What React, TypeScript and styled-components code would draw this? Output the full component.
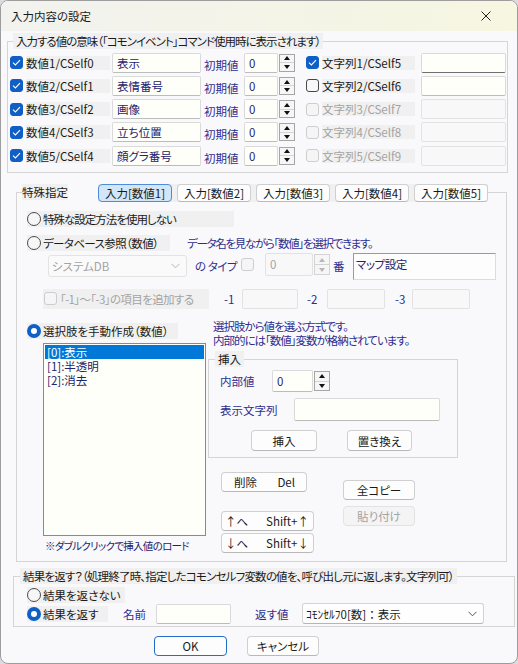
import React from 'react'
import styled, { createGlobalStyle, css } from 'styled-components'

const ink = '#1a1a1a'
const navy = '#2d2d8e'
const fieldInk = '#23236c'
const mute = '#a3a3a3'
const shade = '#f0f0f0'
const accent = '#0f5fc6'

const GlobalStyle = createGlobalStyle`
  * { box-sizing: border-box; }
  html, body { margin: 0; padding: 0; background: #dcdce0; }
  body {
    font-family: "Noto Sans CJK JP", "Noto Sans", sans-serif;
    font-size: 11.5px;
    line-height: 16px;
    font-feature-settings: "palt";
    color: ${ink};
  }
`

const Window = styled.div`
  width: 518px;
  height: 664px;
  display: flex;
  flex-direction: column;
  background: #f9f9fc;
  border: 1px solid #9d9d9d;
  border-radius: 8px;
  overflow: hidden;
`

const TitleBar = styled.div`
  flex: none;
  height: 30px;
  display: flex;
  align-items: center;
  justify-content: space-between;
  padding: 0 26px 0 10px;
  background: linear-gradient(90deg, #f2f2ef 0%, #f6f6e1 100%);
`

const Title = styled.span`
  font-size: 11.5px;
  line-height: 16px;
`

/* ---------- group boxes ---------- */

const Group = styled.fieldset`
  margin: 0;
  padding: 0;
  min-width: 0;
  border: 1px solid #d5d5d5;
`
const TopGroup = styled(Group)`
  margin: 2px 0 0 6px;
  width: 501px;
`
const SpecialGroup = styled(Group)`
  margin: 11px 0 0 15px;
  width: 491px;
`
const ResultGroup = styled(Group)`
  margin: 6px 0 0 12px;
  width: 502px;
`
const InsertGroup = styled(Group)`
  margin-top: 4px;
  width: 250px;
`

const Legend = styled.legend<{ $offset: number; $ls?: number }>`
  margin-left: ${p => p.$offset}px;
  padding: 0 3px;
  height: 16px;
  line-height: 16px;
  letter-spacing: ${p => p.$ls ?? 0}px;
  background: ${shade};
  white-space: nowrap;
`

const SpecialLegend = styled.legend`
  margin-left: 5px;
  padding: 0;
  height: 16px;
  display: flex;
  align-items: flex-start;
`
const SpecialTitle = styled.span`
  height: 16px;
  line-height: 16px;
  padding: 0;
  background: ${shade};
`
const TabStrip = styled.div`
  margin-left: 30px;
  height: 18px;
  display: flex;
  gap: 5px;
  background: ${shade};
`
const Tab = styled.span<{ $active?: boolean }>`
  width: 74px;
  height: 18px;
  display: flex;
  align-items: center;
  justify-content: center;
  border-radius: 4px;
  line-height: 16px;
  border: 1px solid ${p => (p.$active ? '#4d8cd6' : '#cfcfcf')};
  border-bottom-color: ${p => (p.$active ? '#4d8cd6' : '#b9b9b9')};
  background: ${p => (p.$active ? '#d3e5f8' : '#fdfdfd')};
`

/* ---------- controls ---------- */

type CheckState = 'on' | 'off' | 'dis'

const Box = styled.span<{ $state: CheckState }>`
  flex: none;
  width: 13px;
  height: 13px;
  border-radius: 3px;
  display: inline-flex;
  align-items: center;
  justify-content: center;
  ${p => p.$state === 'on' && css`background: ${accent}; border: 1px solid ${accent};`}
  ${p => p.$state === 'off' && css`background: #f7f7f7; border: 1px solid #474747;`}
  ${p => p.$state === 'dis' && css`background: #f5f5f5; border: 1px solid #cdcdcd;`}
`

const Check = ({ state }: { state: CheckState }) => (
  <Box $state={state}>
    {state === 'on' && (
      <svg width="9" height="7" viewBox="0 0 9 7">
        <polyline points="1,3.6 3.4,6 8,1.2" fill="none" stroke="#fff" strokeWidth="1.1" />
      </svg>
    )}
  </Box>
)

const Radio = styled.span<{ $on?: boolean }>`
  flex: none;
  width: 14px;
  height: 14px;
  border-radius: 50%;
  display: inline-flex;
  align-items: center;
  justify-content: center;
  ${p =>
    p.$on
      ? css`
          background: ${accent};
          &::after {
            content: '';
            width: 6px;
            height: 6px;
            border-radius: 50%;
            background: #fff;
          }
        `
      : css`
          background: #f7f7f7;
          border: 1px solid #4b4b4b;
        `}
`

const CheckItem = styled.div<{ $w: number; $dis?: boolean }>`
  display: flex;
  align-items: center;
  width: ${p => p.$w}px;
  color: ${p => (p.$dis ? mute : ink)};
`
const Caption = styled.span`
  flex: 1;
  margin-left: 3px;
  height: 14px;
  line-height: 14px;
  background: ${shade};
  white-space: nowrap;
`

const Shaded = styled.div<{ $w: number; $h?: number; $dis?: boolean; $ls?: number }>`
  flex: none;
  display: flex;
  align-items: center;
  gap: 2px;
  width: ${p => p.$w}px;
  height: ${p => p.$h ?? 16}px;
  line-height: 16px;
  letter-spacing: ${p => p.$ls ?? 0}px;
  background: ${shade};
  color: ${p => (p.$dis ? mute : ink)};
  white-space: nowrap;
`

const Field = styled.div<{ $w: number; $h?: number; $dis?: boolean; $focus?: boolean }>`
  flex: none;
  width: ${p => p.$w}px;
  height: ${p => p.$h ?? 20}px;
  line-height: ${p => (p.$h ?? 20) - 2}px;
  padding: 0 4px;
  border: 1px solid #dadada;
  border-bottom-color: ${p => (p.$focus ? '#707070' : '#bcbcbc')};
  border-radius: 2px;
  background: #fffffa;
  color: ${fieldInk};
  white-space: nowrap;
  overflow: hidden;
  ${p =>
    p.$dis &&
    css`
      background: #f8f8f9;
      border-color: #e2e2e2;
      color: ${mute};
    `}
`

const NumWrap = styled.div`
  flex: none;
  display: flex;
  align-items: center;
`
const Spinner = styled.div<{ $h: number; $dis?: boolean }>`
  flex: none;
  width: 16px;
  height: ${p => p.$h}px;
  margin-left: 1px;
  display: flex;
  flex-direction: column;
  border: 1px solid ${p => (p.$dis ? '#d4d4d4' : '#a6a6a6')};
  background: #f6f6f6;
`
const SpinHalf = styled.span<{ $down?: boolean; $dis?: boolean }>`
  flex: 1;
  display: flex;
  align-items: center;
  justify-content: center;
  & + & {
    border-top: 1px solid ${p => (p.$dis ? '#d4d4d4' : '#a6a6a6')};
  }
  &::before {
    content: '';
    border-left: 3.5px solid transparent;
    border-right: 3.5px solid transparent;
    ${p =>
      p.$down
        ? css`border-top: 4px solid ${p.$dis ? '#b8b8b8' : '#111'};`
        : css`border-bottom: 4px solid ${p.$dis ? '#b8b8b8' : '#111'};`}
  }
`

const NumField = ({ w, h = 20, dis }: { w: number; h?: number; dis?: boolean }) => (
  <NumWrap>
    <Field $w={w} $h={h} $dis={dis}>0</Field>
    <Spinner $h={h - 2} $dis={dis}>
      <SpinHalf $dis={dis} />
      <SpinHalf $down $dis={dis} />
    </Spinner>
  </NumWrap>
)

const ComboBox = styled.div<{ $w: number; $h: number; $dis?: boolean }>`
  flex: none;
  width: ${p => p.$w}px;
  height: ${p => p.$h}px;
  display: flex;
  align-items: center;
  justify-content: space-between;
  padding: 0 6px 0 3px;
  border: 1px solid ${p => (p.$dis ? '#e3e3e3' : '#d3d3d3')};
  border-bottom-color: ${p => (p.$dis ? '#e3e3e3' : '#b5b5b5')};
  border-radius: 3px;
  background: ${p => (p.$dis ? '#fafafa' : '#fefefe')};
  color: ${p => (p.$dis ? mute : ink)};
  white-space: nowrap;
`
const ComboText = styled.span<{ $plain?: boolean }>`
  ${p => p.$plain && css`font-feature-settings: normal;`}
`

const Combo = ({ w, h, dis, plain, children }: { w: number; h: number; dis?: boolean; plain?: boolean; children: React.ReactNode }) => (
  <ComboBox $w={w} $h={h} $dis={dis}>
    <ComboText $plain={plain}>{children}</ComboText>
    <svg width="9" height="6" viewBox="0 0 9 6">
      <polyline points="0.5,0.8 4.5,4.8 8.5,0.8" fill="none" stroke={dis ? '#b5b5b5' : '#555'} strokeWidth="1" />
    </svg>
  </ComboBox>
)

const Button = styled.button<{ $w: number; $h?: number; $dis?: boolean; $primary?: boolean; $split?: boolean }>`
  flex: none;
  font: inherit;
  width: ${p => p.$w}px;
  height: ${p => p.$h ?? 20}px;
  margin: 0;
  padding: ${p => (p.$split ? '0 4px 0 3px' : '0')};
  display: flex;
  align-items: center;
  justify-content: ${p => (p.$split ? 'space-between' : 'center')};
  line-height: 16px;
  border: 1px solid #d0d0d0;
  border-bottom-color: #b8b8b8;
  border-radius: 4px;
  background: #fdfdfd;
  color: ${ink};
  ${p =>
    p.$primary &&
    css`
      border-color: #1f6fc8;
      border-bottom-color: #1f6fc8;
    `}
  ${p =>
    p.$dis &&
    css`
      background: #f4f4f5;
      border-color: #e2e2e2;
      color: ${mute};
    `}
`

const Label = styled.span<{ $w?: number; $blue?: boolean; $drop?: number; $ls?: number }>`
  flex: none;
  ${p => p.$w !== undefined && css`width: ${p.$w}px;`}
  padding-top: ${p => p.$drop ?? 0}px;
  line-height: 16px;
  letter-spacing: ${p => p.$ls ?? 0}px;
  color: ${p => (p.$blue ? navy : ink)};
  white-space: nowrap;
`

/* ---------- top group ---------- */

const ValueGrid = styled.div`
  display: grid;
  grid-template-columns: 102px 92px 40px 62px 115px 85px;
  grid-auto-rows: 21px;
  row-gap: 2.3px;
  align-items: center;
  padding: 3px 0 6px 2px;
`

/* ---------- special group ---------- */

const SpecialBody = styled.div`
  display: flex;
  flex-direction: column;
  padding: 11px 0 8px 10px;
`
const DbRow = styled.div`
  display: flex;
  align-items: center;
  gap: 17px;
  height: 16px;
  margin-top: 8px;
`
const TypeRow = styled.div`
  display: flex;
  align-items: flex-start;
  height: 27px;
  margin: 2px 0 0 21px;
`
const TypeCombo = styled.div`
  margin-top: 2px;
`
const TypeCheck = styled.div`
  margin-top: 5px;
  width: 24px;
`
const MapBox = styled.div`
  flex: none;
  width: 143px;
  height: 27px;
  padding: 0 2px;
  line-height: 20px;
  border: 1px solid #9a9a9a;
  border-right-color: #dcdcdc;
  border-bottom-color: #dcdcdc;
  background: #fdfdfd;
  color: ${fieldInk};
  letter-spacing: -0.4px;
`
const ExtraRow = styled.div`
  display: flex;
  align-items: center;
  height: 21px;
  margin: 8px 0 0 16px;
`
const ExtraCheck = styled(Shaded)`
  padding-left: 1px;
  gap: 3px;
`

const ManualSection = styled.div`
  display: flex;
  margin-top: 10px;
`
const ManualLeft = styled.div`
  width: 181px;
  display: flex;
  flex-direction: column;
`
const ManualRadio = styled(Shaded)`
  margin-top: 4px;
`
const ListBox = styled.div`
  width: 163px;
  height: 193px;
  margin: 4px 0 0 16px;
  padding: 1px;
  border: 1px solid #8a8a8a;
  background: #fffffa;
`
const ListItem = styled.div<{ $selected?: boolean }>`
  height: 14px;
  line-height: 14px;
  padding-left: 2px;
  color: ${p => (p.$selected ? '#fff' : fieldInk)};
  background: ${p => (p.$selected ? '#0078d7' : 'transparent')};
`
const Note = styled.div`
  margin: 3px 0 0 18px;
  font-size: 10.5px;
  line-height: 14px;
  letter-spacing: -0.7px;
  color: ${fieldInk};
  white-space: nowrap;
`
const ManualRight = styled.div`
  width: 250px;
  display: flex;
  flex-direction: column;
`
const Description = styled.div`
  margin-left: 5px;
  line-height: 14px;
  letter-spacing: -1px;
  color: ${navy};
  white-space: nowrap;
`
const InsertBody = styled.div`
  display: flex;
  flex-direction: column;
  padding: 3px 0 6px 11px;
`
const InsertRow = styled.div<{ $h: number; $gap?: number }>`
  display: flex;
  align-items: center;
  height: ${p => p.$h}px;
  margin-top: ${p => p.$gap ?? 0}px;
`
const InsertButtons = styled.div`
  display: flex;
  gap: 30px;
  margin: 9px 0 0 31px;
`
const ActionArea = styled.div`
  display: flex;
  margin: 14px 0 0 13px;
`
const MoveColumn = styled.div`
  width: 93px;
  display: flex;
  flex-direction: column;
  gap: 2px;
`
const UpButton = styled(Button)`
  margin-top: 17px;
`
const ClipColumn = styled.div`
  display: flex;
  flex-direction: column;
  gap: 6px;
  margin: 8px 0 0 29px;
`
const DelButton = styled(Button)`
  padding: 0 11px 0 12px;
`

/* ---------- result group ---------- */

const ResultBody = styled.div`
  display: flex;
  flex-direction: column;
  padding: 3px 0 2px 13px;
`
const ReturnRow = styled.div`
  display: flex;
  align-items: center;
  height: 21px;
`

const Footer = styled.div`
  display: flex;
  gap: 20px;
  margin-top: 9px;
  padding-left: 153px;
`

/* ---------- data ---------- */

const values: { num: string; name: string; str: string; strState: CheckState }[] = [
  { num: '数値1/CSelf0', name: '表示', str: '文字列1/CSelf5', strState: 'on' },
  { num: '数値2/CSelf1', name: '表情番号', str: '文字列2/CSelf6', strState: 'off' },
  { num: '数値3/CSelf2', name: '画像', str: '文字列3/CSelf7', strState: 'dis' },
  { num: '数値4/CSelf3', name: '立ち位置', str: '文字列4/CSelf8', strState: 'dis' },
  { num: '数値5/CSelf4', name: '顔グラ番号', str: '文字列5/CSelf9', strState: 'dis' },
]

const tabs = ['入力[数値1]', '入力[数値2]', '入力[数値3]', '入力[数値4]', '入力[数値5]']
const choices = ['[0]:表示', '[1]:半透明', '[2]:消去']

export default function App() {
  return (
    <>
      <GlobalStyle />
      <Window>
        <TitleBar>
          <Title>入力内容の設定</Title>
          <svg width="10" height="10" viewBox="0 0 10 10">
            <path d="M0.5 0.5 L9.5 9.5 M9.5 0.5 L0.5 9.5" stroke="#222" strokeWidth="1" />
          </svg>
        </TitleBar>

        <TopGroup>
          <Legend $offset={5} $ls={-1}>入力する値の意味（「コモンイベント」コマンド使用時に表示されます）</Legend>
          <ValueGrid>
            {values.map((v, i) => (
              <React.Fragment key={v.num}>
                <CheckItem $w={100}>
                  <Check state="on" />
                  <Caption>{v.num}</Caption>
                </CheckItem>
                <Field $w={89}>{v.name}</Field>
                <Label $blue $drop={4}>初期値</Label>
                <NumField w={34} />
                <CheckItem $w={109} $dis={v.strState === 'dis'}>
                  <Check state={v.strState} />
                  <Caption>{v.str}</Caption>
                </CheckItem>
                <Field $w={85} $dis={v.strState === 'dis'} $focus={i === 0} />
              </React.Fragment>
            ))}
          </ValueGrid>
        </TopGroup>

        <SpecialGroup>
          <SpecialLegend>
            <SpecialTitle>特殊指定</SpecialTitle>
            <TabStrip>
              {tabs.map((t, i) => (
                <Tab key={t} $active={i === 0}>{t}</Tab>
              ))}
            </TabStrip>
          </SpecialLegend>
          <SpecialBody>
            <Shaded $w={207} $ls={-1}>
              <Radio />
              特殊な設定方法を使用しない
            </Shaded>
            <DbRow>
              <Shaded $w={143} $ls={-0.6}>
                <Radio />
                データベース参照（数値）
              </Shaded>
              <Label $blue $ls={-1.3}>データ名を見ながら「数値」を選択できます。</Label>
            </DbRow>
            <TypeRow>
              <TypeCombo>
                <Combo w={139} h={22} dis>システムDB</Combo>
              </TypeCombo>
              <Label $w={46} $blue $drop={5} $ls={-0.5} style={{ marginLeft: 8 }}>の タイプ</Label>
              <TypeCheck>
                <Check state="dis" />
              </TypeCheck>
              <NumField w={48} h={23} dis />
              <Label $w={23} $blue $drop={5} style={{ paddingLeft: 3 }}>番</Label>
              <MapBox>マップ設定</MapBox>
            </TypeRow>
            <ExtraRow>
              <ExtraCheck $w={166} $h={20} $dis $ls={-0.6}>
                <Check state="dis" />
                「-1」～「-3」の項目を追加する
              </ExtraCheck>
              <Label $w={33} $blue style={{ paddingLeft: 15 }}>-1</Label>
              <Field $w={56} $dis />
              <Label $w={29} $blue style={{ paddingLeft: 9 }}>-2</Label>
              <Field $w={58} $dis />
              <Label $w={27} $blue style={{ paddingLeft: 10 }}>-3</Label>
              <Field $w={58} $dis />
            </ExtraRow>

            <ManualSection>
              <ManualLeft>
                <ManualRadio $w={151}>
                  <Radio $on />
                  選択肢を手動作成（数値）
                </ManualRadio>
                <ListBox>
                  {choices.map((c, i) => (
                    <ListItem key={c} $selected={i === 0}>{c}</ListItem>
                  ))}
                </ListBox>
                <Note>※ダブルクリックで挿入値のロード</Note>
              </ManualLeft>

              <ManualRight>
                <Description>
                  選択肢から値を選ぶ方式です。
                  <br />
                  内部的には「数値」変数が格納されています。
                </Description>
                <InsertGroup>
                  <Legend $offset={6}>挿入</Legend>
                  <InsertBody>
                    <InsertRow $h={22}>
                      <Label $w={52} $blue>内部値</Label>
                      <NumField w={41} h={22} />
                    </InsertRow>
                    <InsertRow $h={23} $gap={6}>
                      <Label $w={74} $blue>表示文字列</Label>
                      <Field $w={146} $h={23} />
                    </InsertRow>
                    <InsertButtons>
                      <Button $w={66} $h={21}>挿入</Button>
                      <Button $w={65} $h={21}>置き換え</Button>
                    </InsertButtons>
                  </InsertBody>
                </InsertGroup>
                <ActionArea>
                  <MoveColumn>
                    <DelButton $w={86} $split>
                      <span>削除</span>
                      <span>Del</span>
                    </DelButton>
                    <UpButton $w={93} $split>
                      <span>↑へ</span>
                      <span>Shift+↑</span>
                    </UpButton>
                    <Button $w={93} $split>
                      <span>↓へ</span>
                      <span>Shift+↓</span>
                    </Button>
                  </MoveColumn>
                  <ClipColumn>
                    <Button $w={72}>全コピー</Button>
                    <Button $w={72} $dis>貼り付け</Button>
                  </ClipColumn>
                </ActionArea>
              </ManualRight>
            </ManualSection>
          </SpecialBody>
        </SpecialGroup>

        <ResultGroup>
          <Legend $offset={6} $ls={-0.8}>結果を返す？（処理終了時、指定したコモンセルフ変数の値を、呼び出し元に返します。文字列可）</Legend>
          <ResultBody>
            <Shaded $w={98}>
              <Radio />
              結果を返さない
            </Shaded>
            <ReturnRow>
              <Shaded $w={81}>
                <Radio $on />
                結果を返す
              </Shaded>
              <Label $w={48} $blue style={{ paddingLeft: 15 }}>名前</Label>
              <Field $w={75} />
              <Label $w={71} $blue style={{ paddingLeft: 24 }}>返す値</Label>
              <Combo w={182} h={21} plain>ｺﾓﾝｾﾙﾌ0[数]：表示</Combo>
            </ReturnRow>
          </ResultBody>
        </ResultGroup>

        <Footer>
          <Button $w={73} $primary>OK</Button>
          <Button $w={72}>キャンセル</Button>
        </Footer>
      </Window>
    </>
  )
}
